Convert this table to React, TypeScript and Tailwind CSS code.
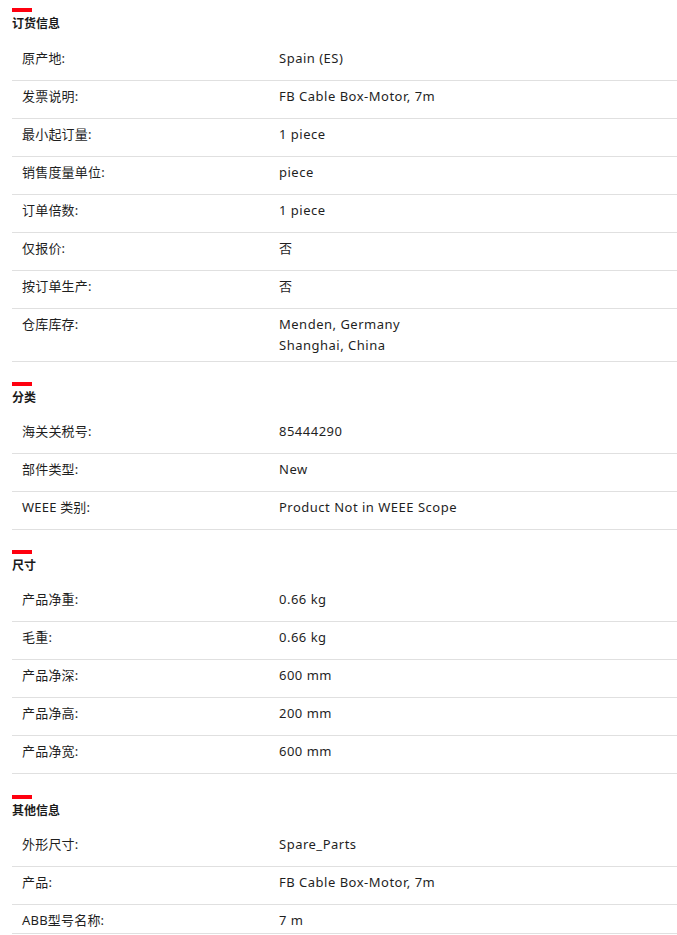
import React from "react";

type Row = { label: string; value: string[] };
type Section = { title: string; rows: Row[] };

const sections: Section[] = [
  {
    title: "订货信息",
    rows: [
      { label: "原产地:", value: ["Spain (ES)"] },
      { label: "发票说明:", value: ["FB Cable Box-Motor, 7m"] },
      { label: "最小起订量:", value: ["1 piece"] },
      { label: "销售度量单位:", value: ["piece"] },
      { label: "订单倍数:", value: ["1 piece"] },
      { label: "仅报价:", value: ["否"] },
      { label: "按订单生产:", value: ["否"] },
      { label: "仓库库存:", value: ["Menden, Germany", "Shanghai, China"] },
    ],
  },
  {
    title: "分类",
    rows: [
      { label: "海关关税号:", value: ["85444290"] },
      { label: "部件类型:", value: ["New"] },
      { label: "WEEE 类别:", value: ["Product Not in WEEE Scope"] },
    ],
  },
  {
    title: "尺寸",
    rows: [
      { label: "产品净重:", value: ["0.66 kg"] },
      { label: "毛重:", value: ["0.66 kg"] },
      { label: "产品净深:", value: ["600 mm"] },
      { label: "产品净高:", value: ["200 mm"] },
      { label: "产品净宽:", value: ["600 mm"] },
    ],
  },
  {
    title: "其他信息",
    rows: [
      { label: "外形尺寸:", value: ["Spare_Parts"] },
      { label: "产品:", value: ["FB Cable Box-Motor, 7m"] },
      { label: "ABB型号名称:", value: ["7 m"] },
    ],
  },
];

export default function App() {
  return (
    <div
      className="min-h-[935px] w-[677px] bg-white pl-3 pt-2 text-[13px] text-[#1f1f1f] overflow-hidden"
      style={{ fontFamily: '"Noto Sans", "Noto Sans CJK SC", sans-serif' }}
    >
      {sections.map((s, si) => (
        <div
          key={s.title}
          className={si === 0 ? "" : si === sections.length - 1 ? "pt-[21px]" : "pt-5"}
        >
          <div className="h-1 w-5 bg-[#ff000f]" />
          <div className="mt-1 h-4 text-[12px] font-bold leading-4 text-[#1a1a1a]">
            {s.title}
          </div>
          <div className={si === 0 ? "mt-[11px]" : "mt-[10px]"}>
            {s.rows.map((r, ri) => {
              const last = si === sections.length - 1 && ri === s.rows.length - 1;
              return (
                <div
                  key={r.label}
                  className={
                    "grid grid-cols-[267px_1fr] border-b border-[#e0e0e0] pt-[5px] leading-[21px] " +
                    (last ? "h-[29px]" : "min-h-[38px] pb-[5px]")
                  }
                >
                  <div className="pl-[10px] tracking-[0.2px]">{r.label}</div>
                  <div className="tracking-[0.5px]">
                    {r.value.map((v) => (
                      <div key={v}>{v}</div>
                    ))}
                  </div>
                </div>
              );
            })}
          </div>
        </div>
      ))}
    </div>
  );
}
